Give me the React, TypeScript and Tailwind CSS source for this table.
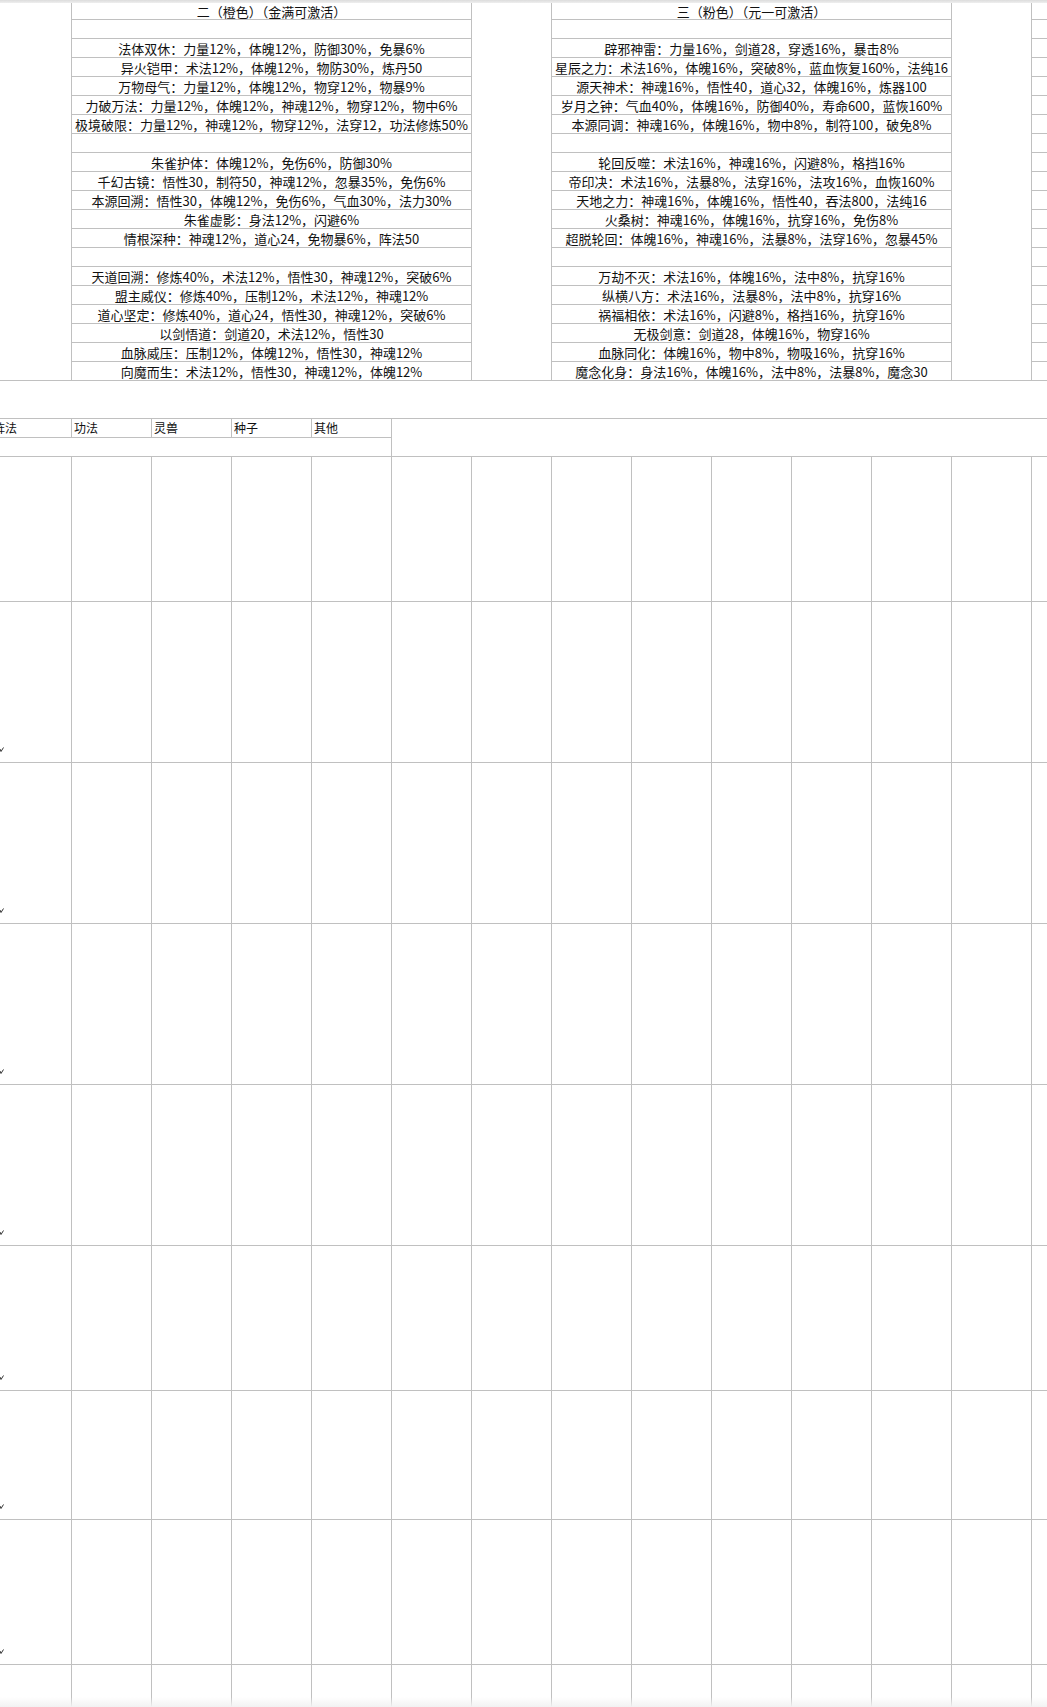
const font = { fontFamily: '"Noto Sans CJK SC", "Noto Sans", sans-serif' };

const leftRows = [
  "二（橙色）（金满可激活）",
  "",
  "法体双休：力量12%，体魄12%，防御30%，免暴6%",
  "异火铠甲：术法12%，体魄12%，物防30%，炼丹50",
  "万物母气：力量12%，体魄12%，物穿12%，物暴9%",
  "力破万法：力量12%，体魄12%，神魂12%，物穿12%，物中6%",
  "极境破限：力量12%，神魂12%，物穿12%，法穿12，功法修炼50%",
  "",
  "朱雀护体：体魄12%，免伤6%，防御30%",
  "千幻古镜：悟性30，制符50，神魂12%，忽暴35%，免伤6%",
  "本源回溯：悟性30，体魄12%，免伤6%，气血30%，法力30%",
  "朱雀虚影：身法12%，闪避6%",
  "情根深种：神魂12%，道心24，免物暴6%，阵法50",
  "",
  "天道回溯：修炼40%，术法12%，悟性30，神魂12%，突破6%",
  "盟主威仪：修炼40%，压制12%，术法12%，神魂12%",
  "道心坚定：修炼40%，道心24，悟性30，神魂12%，突破6%",
  "以剑悟道：剑道20，术法12%，悟性30",
  "血脉威压：压制12%，体魄12%，悟性30，神魂12%",
  "向魔而生：术法12%，悟性30，神魂12%，体魄12%",
];

const rightRows = [
  "三（粉色）（元一可激活）",
  "",
  "辟邪神雷：力量16%，剑道28，穿透16%，暴击8%",
  "星辰之力：术法16%，体魄16%，突破8%，蓝血恢复160%，法纯16",
  "源天神术：神魂16%，悟性40，道心32，体魄16%，炼器100",
  "岁月之钟：气血40%，体魄16%，防御40%，寿命600，蓝恢160%",
  "本源同调：神魂16%，体魄16%，物中8%，制符100，破免8%",
  "",
  "轮回反噬：术法16%，神魂16%，闪避8%，格挡16%",
  "帝印决：术法16%，法暴8%，法穿16%，法攻16%，血恢160%",
  "天地之力：神魂16%，体魄16%，悟性40，吞法800，法纯16",
  "火桑树：神魂16%，体魄16%，抗穿16%，免伤8%",
  "超脱轮回：体魄16%，神魂16%，法暴8%，法穿16%，忽暴45%",
  "",
  "万劫不灭：术法16%，体魄16%，法中8%，抗穿16%",
  "纵横八方：术法16%，法暴8%，法中8%，抗穿16%",
  "祸福相依：术法16%，闪避8%，格挡16%，抗穿16%",
  "无极剑意：剑道28，体魄16%，物穿16%",
  "血脉同化：体魄16%，物中8%，物吸16%，抗穿16%",
  "魔念化身：身法16%，体魄16%，法中8%，法暴8%，魔念30",
];

const tallRows = [145, 161, 161, 161, 161, 145, 129, 145];
const cols = Array.from({ length: 12 }, (_, i) => i);

function TopRow({ left, right, index }: { left: string; right: string; index: number }) {
  const first = index === 0;
  const last = index === leftRows.length - 1;
  return (
    <div className={`flex ${first ? "h-[17px] items-end" : "h-[19px]"}`}>
      <div className={`w-[72px] h-full shrink-0 border-r border-[#c0c0c0] ${last ? "border-b" : ""}`} />
      <div className="w-[400px] h-full shrink-0 border-r border-b border-[#c0c0c0] flex items-center justify-center whitespace-nowrap pt-[2px]">
        {left}
      </div>
      <div className={`w-[80px] h-full shrink-0 border-r border-[#c0c0c0] ${last ? "border-b" : ""}`} />
      <div className="w-[400px] h-full shrink-0 border-r border-b border-[#c0c0c0] flex items-center justify-center whitespace-nowrap pt-[2px]">
        {right}
      </div>
      <div className={`w-[80px] h-full shrink-0 border-r border-[#c0c0c0] ${last ? "border-b" : ""}`} />
      <div className="flex-1 h-full border-b border-[#c0c0c0]" />
    </div>
  );
}

// the tail of a clipped glyph peeking in from the hidden column on the left
function Tick() {
  return (
    <svg width="4" height="6" viewBox="0 0 4 6" className="block">
      <path d="M0 2 L1 4.5 L3.5 0.5" fill="none" stroke="#333" strokeWidth="1" />
    </svg>
  );
}

function TallRow({ height, mark }: { height: number; mark: boolean }) {
  return (
    <div className="flex shrink-0" style={{ height }}>
      <div className="w-[72px] shrink-0 border-r border-b border-[#c0c0c0] flex items-end pb-[9px]">
        {mark && <Tick />}
      </div>
      {cols.map((c) => (
        <div key={c} className="w-[80px] shrink-0 border-r border-b border-[#c0c0c0]" />
      ))}
      <div className="flex-1 border-b border-[#c0c0c0]" />
    </div>
  );
}

export default function App() {
  return (
    <div className="relative w-[1047px] h-[1707px] overflow-hidden bg-white text-[13px] text-[#111] flex flex-col" style={font}>
      <div className="h-[3px] shrink-0 bg-gradient-to-b from-[#dcdcdc] to-[#efefef]" />

      {leftRows.map((l, i) => (
        <TopRow key={i} left={l} right={rightRows[i]} index={i} />
      ))}

      <div className="h-[38px] shrink-0 border-b border-[#c0c0c0]" />

      <div className="flex h-[38px] shrink-0">
        <div className="w-[392px] shrink-0 flex flex-col">
          <div className="flex h-[19px] text-[12px]">
            <div className="w-[72px] shrink-0 border-r border-b border-[#c0c0c0] overflow-hidden whitespace-nowrap flex items-center">
              <span className="-ml-[7px]">阵法</span>
            </div>
            {["功法", "灵兽", "种子", "其他"].map((t) => (
              <div key={t} className="w-[80px] shrink-0 border-r border-b border-[#c0c0c0] px-[2px] flex items-center">
                {t}
              </div>
            ))}
          </div>
          <div className="h-[19px] border-r border-b border-[#c0c0c0]" />
        </div>
        <div className="flex-1 border-b border-[#c0c0c0]" />
      </div>

      {tallRows.map((h, i) => (
        <TallRow key={i} height={h} mark={i > 0} />
      ))}

      <div className="flex flex-1">
        <div className="w-[72px] shrink-0 border-r border-[#c0c0c0]" />
        {cols.map((c) => (
          <div key={c} className="w-[80px] shrink-0 border-r border-[#c0c0c0]" />
        ))}
        <div className="flex-1" />
      </div>

      <div className="pointer-events-none absolute bottom-0 left-0 right-0 h-[10px] bg-gradient-to-b from-transparent to-[#f2f2f2]" />
    </div>
  );
}
